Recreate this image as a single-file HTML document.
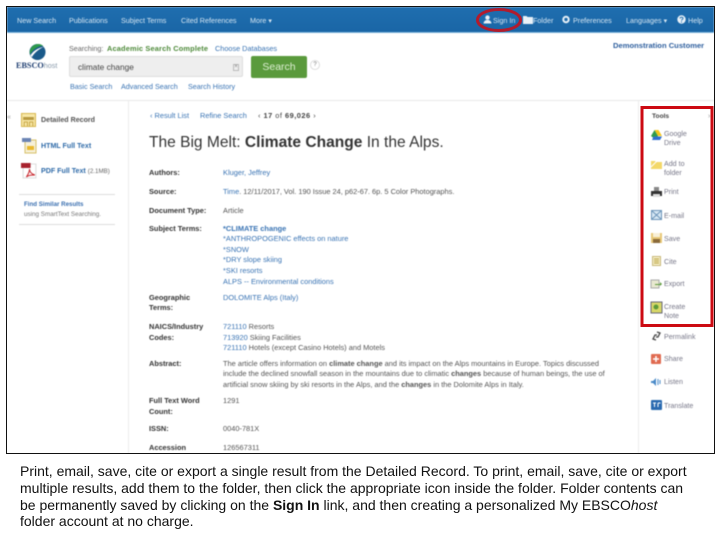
<!DOCTYPE html>
<html lang="en">
<head>
<meta charset="utf-8">
<title>Detailed Record</title>
<style>
html,body{margin:0;padding:0;background:#fff;width:720px;height:540px;overflow:hidden}
body{position:relative;font-family:"Liberation Sans",sans-serif}
#shot{position:absolute;left:7px;top:7px;width:707px;height:446px;overflow:hidden;background:#fff;filter:blur(.45px)}
#frame{position:absolute;left:6px;top:6px;width:707px;height:446px;border:1px solid #111;pointer-events:none}
#inner{position:absolute;left:-7px;top:-7px;width:720px;height:540px}
#inner div{position:absolute;white-space:nowrap}
.nav{font-size:7.2px;color:#d5e6f3;top:16px;line-height:9px}
.lnk{color:#3a74b4}
.lbl{font-size:7.4px;font-weight:bold;color:#333;left:149px;line-height:9px}
.val{font-size:7.42px;color:#555;left:223px;line-height:9px}
.blue{color:#3a74b4}
.tool{font-size:7.1px;color:#778;left:664px;line-height:9px}
svg{position:absolute;overflow:visible}
#cap{position:absolute;left:20px;top:463px;font-size:14px;line-height:16.8px;color:#111;white-space:nowrap}
</style>
</head>
<body>
<div id="shot"><div id="inner">
  <div style="left:0;top:7px;width:720px;height:25px;background:linear-gradient(#1f6eaf,#1a66a6)"></div>
  <div style="left:0;top:32px;width:720px;height:1px;background:#7fb6dd"></div>

  <div class="nav" style="left:17px">New Search</div>
  <div class="nav" style="left:69px">Publications</div>
  <div class="nav" style="left:121px">Subject Terms</div>
  <div class="nav" style="left:181px">Cited References</div>
  <div class="nav" style="left:250px">More ▾</div>

  <svg style="left:483px;top:15px" width="9" height="9" viewBox="0 0 9 9"><circle cx="4.5" cy="2.6" r="2.2" fill="#e8f1f8"/><path d="M.5 8.5C.8 5.8 2.6 5 4.5 5s3.700.8 4 3.500z" fill="#e8f1f8"/></svg>
  <div class="nav" style="left:493px">Sign In</div>
  <svg style="left:523px;top:15px" width="10" height="9" viewBox="0 0 10 9"><path d="M0 1h3.500l1 1H10v7H0z" fill="#e8f1f8"/></svg>
  <div class="nav" style="left:533px">Folder</div>
  <svg style="left:562px;top:15px" width="8" height="9" viewBox="0 0 8 9"><circle cx="4" cy="4.500" r="2.700" fill="none" stroke="#e8f1f8" stroke-width="2"/></svg>
  <div class="nav" style="left:573px">Preferences</div>
  <div class="nav" style="left:626px">Languages ▾</div>
  <svg style="left:677px;top:15px" width="9" height="9" viewBox="0 0 9 9"><circle cx="4.500" cy="4.500" r="4.200" fill="#e8f1f8"/><path d="M3 3.400C3.200 1.800 6 1.900 6 3.400 6 4.500 4.500 4.500 4.500 5.600" fill="none" stroke="#1f6eaf" stroke-width="1"/><circle cx="4.500" cy="7" r=".6" fill="#1f6eaf"/></svg>
  <div class="nav" style="left:688px">Help</div>

  <svg style="left:29px;top:43px" width="17" height="18" viewBox="0 0 18 19"><circle cx="9" cy="9.500" r="8.500" fill="#1a5a8a"/><path d="M1 12C0 6 4 1 10 1c2 0 4 1 5 2C9 3 4 7 1 12z" fill="#2e9a4a"/><path d="M1.500 13C5 8 10 5 16 4c-5 2-10 6-13 11z" fill="#fff"/></svg>
  <div style="left:16px;top:61px;font:bold 8.200px/10px 'Liberation Serif',serif;color:#1d3d70">EBSCO<span style="font-weight:normal;color:#89a;font-size:7.200px;font-family:'Liberation Sans',sans-serif">host</span></div>

  <div style="left:69px;top:44px;font-size:7.200px;line-height:9px;color:#666">Searching:</div>
  <div style="left:107px;top:44px;font-size:7.400px;line-height:9px;color:#4e8a3a;font-weight:bold;letter-spacing:.16px">Academic Search Complete</div>
  <div class="lnk" style="left:215px;top:44px;font-size:7.300px;line-height:9px">Choose Databases</div>
  <div style="left:69px;top:56px;width:174px;height:21px;background:#eeeeee;border:1px solid #ddd;border-radius:2px;box-sizing:border-box"></div>
  <div style="left:78px;top:62px;font-size:8.300px;line-height:10px;color:#444">climate change</div>
  <div style="left:233px;top:64px;width:6px;height:7px;border:1px solid #bbb;box-sizing:border-box;font-size:6px;line-height:5px;color:#888;text-align:center">×</div>
  <div style="left:251px;top:56px;width:56px;height:22px;background:#5a9a3c;border-radius:2px;color:#dcefd2;font-size:10.500px;line-height:22px;text-align:center">Search</div>
  <div style="left:310px;top:60px;width:8px;height:8px;border:1px solid #ddd;border-radius:50%;font-size:6px;line-height:8px;text-align:center;color:#777">?</div>
  <div class="lnk" style="left:70px;top:82px;font-size:7.200px;line-height:9px">Basic Search</div>
  <div class="lnk" style="left:121px;top:82px;font-size:7.200px;line-height:9px">Advanced Search</div>
  <div class="lnk" style="left:188px;top:82px;font-size:7.200px;line-height:9px">Search History</div>
  <div style="left:613px;top:41px;font-size:7.600px;font-weight:bold;line-height:9px;color:#2e5f9e">Demonstration Customer</div>

  <div style="left:0;top:100px;width:720px;height:1px;background:#e8e8e8"></div>
  <div style="left:128px;top:101px;width:1px;height:353px;background:#ececec"></div>
  <div style="left:638px;top:101px;width:1px;height:353px;background:#ececec"></div>
  <div style="left:7px;top:114px;font-size:7px;line-height:7px;color:#999">«</div>

  <svg style="left:21px;top:113px" width="15" height="14" viewBox="0 0 14 14" preserveAspectRatio="none"><rect x=".5" y=".5" width="13" height="13" fill="#f8e8a8" stroke="#d8b850"/><rect x="2" y="4" width="10" height="3" fill="#b89a40"/><path d="M3 13V9h3v4M8 13V9h3v4" fill="none" stroke="#c8a848"/></svg>
  <div style="left:41px;top:116px;font-size:7.100px;font-weight:bold;line-height:9px;color:#555">Detailed Record</div>
  <svg style="left:22px;top:138px" width="15" height="15" viewBox="0 0 15 15"><rect x="3" y="2" width="11" height="13" fill="#f6f0d8" stroke="#d8c068"/><rect x="5" y="8" width="7" height="4" fill="#eab92d"/><rect y="0" width="9" height="4" fill="#6b84b4"/></svg>
  <div style="left:41px;top:142px;font-size:7.100px;font-weight:bold;line-height:9px;color:#2e6aa8">HTML Full Text</div>
  <svg style="left:21px;top:163px" width="16" height="15" viewBox="0 0 15 15" preserveAspectRatio="none"><rect x="2" y="1" width="12" height="14" fill="#fff" stroke="#ddd"/><rect y="0" width="9" height="5" fill="#a8222e"/><path d="M5 14C7 11 8 8 8 6c0 3 2 5 5 6-3 0-6 0-8 2z" fill="none" stroke="#c82a30"/></svg>
  <div style="left:41px;top:167px;font-size:7.100px;line-height:9px;color:#2e6aa8;font-weight:bold">PDF Full Text <span style="font-weight:normal;color:#666;font-size:6.200px">(2.1MB)</span></div>
  <div style="left:19px;top:194px;width:96px;height:1px;background:#ddd"></div>
  <div style="left:24px;top:201px;font-size:6.200px;font-weight:bold;line-height:8px;color:#3a6fb0">Find Similar Results</div>
  <div style="left:24px;top:211px;font-size:6.300px;line-height:8px;color:#777">using SmartText Searching.</div>
  <div style="left:19px;top:224px;width:96px;height:1px;background:#ddd"></div>

  <div style="left:150px;top:111px;font-size:7.400px;line-height:9px;color:#3a74b4">‹ Result List</div>
  <div style="left:200px;top:111px;font-size:7.400px;line-height:9px;color:#3a74b4">Refine Search</div>
  <div style="left:258px;top:111px;font-size:7.400px;line-height:9px;color:#444;letter-spacing:.5px">‹ <b>17</b> of <b>69,026</b> ›</div>
  <div style="left:149px;top:134px;font-size:15.550px;line-height:18px;color:#333">The Big Melt: <b>Climate Change</b> In the Alps.</div>

  <div class="lbl" style="top:168px">Authors:</div>
  <div class="val blue" style="top:168px">Kluger, Jeffrey</div>
  <div class="lbl" style="top:187px">Source:</div>
  <div class="val" style="top:187px"><span class="blue">Time</span>. 12/11/2017, Vol. 190 Issue 24, p62-67. 6p. 5 Color Photographs.</div>
  <div class="lbl" style="top:206px">Document Type:</div>
  <div class="val" style="top:206px">Article</div>
  <div class="lbl" style="top:224px">Subject Terms:</div>
  <div class="val blue" style="top:224px"><b>*CLIMATE change</b></div>
  <div class="val blue" style="top:234px">*ANTHROPOGENIC effects on nature</div>
  <div class="val blue" style="top:245px">*SNOW</div>
  <div class="val blue" style="top:255px">*DRY slope skiing</div>
  <div class="val blue" style="top:266px">*SKI resorts</div>
  <div class="val blue" style="top:277px">ALPS -- Environmental conditions</div>

  <div class="lbl" style="top:293px">Geographic</div>
  <div class="lbl" style="top:303px">Terms:</div>
  <div class="val blue" style="top:293px">DOLOMITE Alps (Italy)</div>
  <div class="lbl" style="top:322px">NAICS/Industry</div>
  <div class="lbl" style="top:333px">Codes:</div>
  <div class="val" style="top:322px"><span class="blue">721110</span> Resorts</div>
  <div class="val" style="top:333px"><span class="blue">713920</span> Skiing Facilities</div>
  <div class="val" style="top:343px"><span class="blue">721110</span> Hotels (except Casino Hotels) and Motels</div>
  <div class="lbl" style="top:359px">Abstract:</div>
  <div class="val" style="top:359px">The article offers information on <b>climate change</b> and its impact on the Alps mountains in Europe. Topics discussed</div>
  <div class="val" style="top:369px">include the declined snowfall season in the mountains due to climatic <b>changes</b> because of human beings, the use of</div>
  <div class="val" style="top:380px">artificial snow skiing by ski resorts in the Alps, and the <b>changes</b> in the Dolomite Alps in Italy.</div>
  <div class="lbl" style="top:396px">Full Text Word</div>
  <div class="lbl" style="top:407px">Count:</div>
  <div class="val" style="top:396px">1291</div>
  <div class="lbl" style="top:424px">ISSN:</div>
  <div class="val" style="top:424px">0040-781X</div>
  <div class="lbl" style="top:443px">Accession</div>
  <div class="val" style="top:443px">126567311</div>

  <div style="left:652px;top:112px;font-size:6.600px;font-weight:bold;line-height:9px;color:#444">Tools</div>
  <div style="left:708px;top:112px;font-size:7px;line-height:9px;color:#999">›</div>

  <svg style="left:651px;top:130px" width="11" height="10" viewBox="0 0 11 10"><path d="M3.500 0h4L11 6H7z" fill="#f5c518"/><path d="M3.500 0L7 6 5 10 0 6z" fill="#2f9a4c"/><path d="M2.500 6.500H11L9 10H1z" fill="#2f6fd0"/></svg>
  <div class="tool" style="top:130px">Google</div>
  <div class="tool" style="top:139px">Drive</div>
  <svg style="left:651px;top:159px" width="11" height="10" viewBox="0 0 11 10"><path d="M0 2h4l1 1h6v7H0z" fill="#f3d868"/><path d="M0 8L6 2" stroke="#fff"/></svg>
  <div class="tool" style="top:160px">Add to</div>
  <div class="tool" style="top:169px">folder</div>
  <svg style="left:651px;top:187px" width="11" height="10" viewBox="0 0 11 10"><rect x="3" y="0" width="5" height="4" fill="#888"/><rect y="4" width="11" height="5" fill="#333"/><rect x="2" y="7" width="7" height="3" fill="#ddd"/></svg>
  <div class="tool" style="top:188px">Print</div>
  <svg style="left:651px;top:210px" width="11" height="10" viewBox="0 0 11 10"><rect x=".5" y=".5" width="10" height="9" fill="#d8e8f4" stroke="#6a93b8"/><path d="M1 1l9 8M10 1L1 9" stroke="#6a93b8"/></svg>
  <div class="tool" style="top:212px">E-mail</div>
  <svg style="left:651px;top:233px" width="11" height="10" viewBox="0 0 11 10"><rect width="11" height="10" fill="#e8c878"/><rect x="2" y="0" width="7" height="4" fill="#f8f0d8"/><rect x="2" y="6" width="7" height="4" fill="#8a6a3a"/></svg>
  <div class="tool" style="top:235px">Save</div>
  <svg style="left:652px;top:256px" width="9" height="10" viewBox="0 0 9 10"><rect x=".5" y=".5" width="8" height="9" fill="#f6efc8" stroke="#c8b878"/><path d="M2 3h5M2 5h5M2 7h5" stroke="#b8a040"/></svg>
  <div class="tool" style="top:258px">Cite</div>
  <svg style="left:651px;top:279px" width="11" height="10" viewBox="0 0 11 10"><rect y="1" width="8" height="8" fill="#e8e8d0" stroke="#aaa"/><path d="M4 5h5V3l2 2-2 2V6H4z" fill="#5c9a3a"/></svg>
  <div class="tool" style="top:280px">Export</div>
  <svg style="left:651px;top:302px" width="11" height="11" viewBox="0 0 11 11"><rect width="11" height="11" fill="#d8d868" stroke="#667"/><circle cx="5" cy="5" r="2.500" fill="#5c9a3a"/></svg>
  <div class="tool" style="top:303px">Create</div>
  <div class="tool" style="top:312px">Note</div>
  <svg style="left:652px;top:331px" width="9" height="10" viewBox="0 0 9 10"><path d="M5 1l3 1-2 4-2 0M4 9L1 8l2-4 2 0" fill="none" stroke="#444" stroke-width="1.300"/></svg>
  <div class="tool" style="top:333px">Permalink</div>
  <svg style="left:651px;top:354px" width="10" height="10" viewBox="0 0 10 10"><rect width="10" height="10" rx="1" fill="#e06a50"/><path d="M2 5h6M5 2v6" stroke="#fff" stroke-width="1.500"/></svg>
  <div class="tool" style="top:355px">Share</div>
  <svg style="left:651px;top:377px" width="11" height="10" viewBox="0 0 11 10"><path d="M0 4h2l3-3v8L2 6H0z" fill="#4a8ac8"/><path d="M7 2v6M9 3v4" stroke="#4a8ac8"/></svg>
  <div class="tool" style="top:378px">Listen</div>
  <svg style="left:651px;top:400px" width="11" height="10" viewBox="0 0 11 10"><rect width="11" height="10" rx="1" fill="#2a6ab0"/><path d="M2 3h3M3.500 3v4M7 3h2.500M7 3v4" stroke="#fff"/></svg>
  <div class="tool" style="top:402px">Translate</div>
</div></div>
<div id="frame"></div>

<svg style="left:0;top:0" width="720" height="540">
  <ellipse cx="499" cy="20" rx="21.500" ry="10.500" fill="none" stroke="#b01c2e" stroke-width="3"/>
  <rect x="642" y="107.500" width="70" height="218" fill="none" stroke="#cc0a12" stroke-width="3"/>
</svg>

<div id="cap">Print, email, save, cite or export a single result from the Detailed Record. To print, email, save, cite or export<br>multiple results, add them to the folder, then click the appropriate icon inside the folder. Folder contents can<br>be permanently saved by clicking on the <b>Sign In</b> link, and then creating a personalized My EBSCO<i>host</i><br>folder account at no charge.</div>
</body>
</html>
